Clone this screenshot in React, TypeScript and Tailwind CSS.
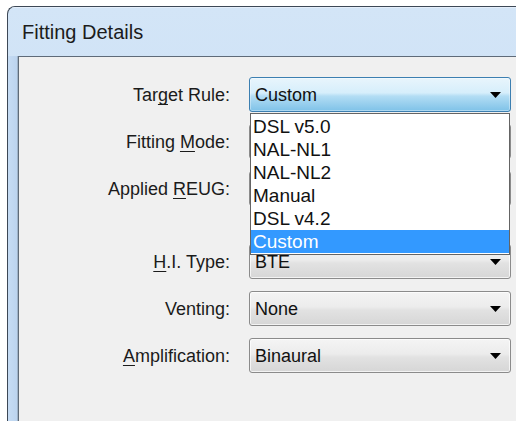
import React from "react";

type Row = {
  pre: string;
  key?: string;
  post: string;
  value: string;
  open?: boolean;
};

const rowsTop: Row[] = [
  { pre: "Tar", key: "g", post: "et Rule:", value: "Custom", open: true },
  { pre: "Fitting ", key: "M", post: "ode:", value: "" },
  { pre: "Applied ", key: "R", post: "EUG:", value: "" },
];

const rowsBottom: Row[] = [
  { pre: "", key: "H", post: ".I. Type:", value: "BTE" },
  { pre: "Venting:", post: "", value: "None" },
  { pre: "", key: "A", post: "mplification:", value: "Binaural" },
];

const ruleOptions = ["DSL v5.0", "NAL-NL1", "NAL-NL2", "Manual", "DSL v4.2", "Custom"];

function Arrow() {
  return (
    <svg width="11" height="6" viewBox="0 0 11 6" className="shrink-0">
      <path d="M0 0H11L5.5 6Z" fill="#000" />
    </svg>
  );
}

function Combo({ value, open }: { value: string; open?: boolean }) {
  return (
    <div
      className={
        open
          ? "relative z-10 flex h-[35px] items-center justify-between rounded-[3px] border border-[#3c7fb1] bg-[linear-gradient(#e8f5fc_0%,#d6eefb_45%,#b3ddf4_55%,#7fc2e8_100%)] pl-[5px] pr-[9px] shadow-[inset_0_0_0_1px_rgba(255,255,255,0.35)]"
          : "relative flex h-[35px] items-center justify-between rounded-[3px] border border-[#8b8b8b] bg-[linear-gradient(#f4f4f4_0%,#ececec_45%,#e2e2e2_55%,#d6d6d6_100%)] pl-[5px] pr-[9px] shadow-[inset_0_0_0_1px_rgba(255,255,255,0.7)]"
      }
    >
      <span className="text-[18px] leading-none">{value}</span>
      <Arrow />
      {open && (
        <div className="absolute left-0 right-0 top-[35px] border border-[#646464] bg-white py-[1px]">
          {ruleOptions.map((opt) => (
            <div
              key={opt}
              className={
                opt === value
                  ? "flex h-[23px] items-center bg-[#3399ff] pl-[2px] text-[19px] leading-none text-white"
                  : "flex h-[23px] items-center pl-[2px] text-[19px] leading-none text-[#111]"
              }
            >
              {opt}
            </div>
          ))}
        </div>
      )}
    </div>
  );
}

function FieldLabel({ row }: { row: Row }) {
  return (
    <div className="text-right text-[18px] leading-none text-[#1b1b1b]">
      {row.pre}
      {row.key && (
        <span className="underline decoration-1 underline-offset-[3px] [text-decoration-skip-ink:none]">
          {row.key}
        </span>
      )}
      {row.post}
    </div>
  );
}

export default function App() {
  return (
    <div className="h-[421px] w-[516px] overflow-hidden bg-white font-['Liberation_Sans',Arial,sans-serif] text-[#111]">
      <div className="ml-[7px] mt-[6px] flex h-[440px] w-[530px] flex-col overflow-hidden rounded-tl-[8px] border-l border-t border-[#3d4856] bg-[linear-gradient(#d3e5f7,#c3daf3)]">
        {/* caption */}
        <div className="flex h-[49px] shrink-0 items-center border-t border-[#e4eefa] pl-[14px] text-[20px] text-[#1c1c1c]">
          Fitting Details
        </div>
        <div className="flex flex-1">
          {/* side frame */}
          <div className="w-[10px] shrink-0 border-r border-[#9fb3c9] bg-[linear-gradient(90deg,#c6dcf4,#bcd4ef)]" />
          {/* client area */}
          <div className="flex-1 border-l border-t border-[#5f6b79] bg-[#f0f0f0] pt-[20px]">
            <div className="grid grid-cols-[211px_262px] items-center gap-x-[19px] gap-y-[12px]">
              {rowsTop.map((r) => (
                <React.Fragment key={r.pre + r.post}>
                  <FieldLabel row={r} />
                  <Combo value={r.value} open={r.open} />
                </React.Fragment>
              ))}
              <div className="col-span-2 h-[14px]" />
              {rowsBottom.map((r) => (
                <React.Fragment key={r.pre + r.post}>
                  <FieldLabel row={r} />
                  <Combo value={r.value} />
                </React.Fragment>
              ))}
            </div>
          </div>
        </div>
      </div>
    </div>
  );
}
